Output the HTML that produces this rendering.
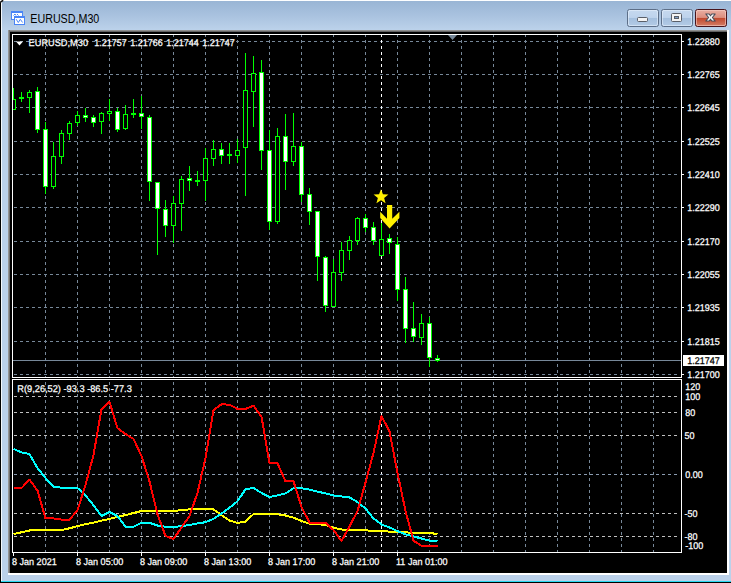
<!DOCTYPE html>
<html lang="en"><head><meta charset="utf-8"><title>EURUSD,M30</title>
<style>
html,body{margin:0;padding:0;background:#bbd1ea;overflow:hidden}
body{width:731px;height:583px;position:relative;font-family:"Liberation Sans",sans-serif}
svg{position:absolute;left:0;top:0;display:block}
.t{font-family:"Liberation Sans",sans-serif;font-size:9.7px;text-rendering:geometricPrecision;fill:#fff;stroke:#fff;stroke-width:0.25px}
.cap{font-family:"Liberation Sans",sans-serif;font-size:12px;fill:#000}
</style></head><body>
<svg width="731" height="583" viewBox="0 0 731 583">
<defs>
<linearGradient id="frm" x1="0" y1="0" x2="0" y2="1"><stop offset="0" stop-color="#98b4d4"/><stop offset="0.5" stop-color="#a9c2df"/><stop offset="1" stop-color="#bdd3eb"/></linearGradient>
<linearGradient id="glow" x1="0" y1="0" x2="1" y2="0"><stop offset="0" stop-color="#d3e2f2" stop-opacity="0.15"/><stop offset="1" stop-color="#d3e2f2" stop-opacity="0"/></linearGradient>
<linearGradient id="btn" x1="0" y1="0" x2="0" y2="1"><stop offset="0" stop-color="#c6d9ef"/><stop offset="0.47" stop-color="#bed3ec"/><stop offset="0.48" stop-color="#a3bedd"/><stop offset="1" stop-color="#b4cce6"/></linearGradient>
<linearGradient id="cls" x1="0" y1="0" x2="0" y2="1"><stop offset="0" stop-color="#eab0a4"/><stop offset="0.47" stop-color="#dc8e7f"/><stop offset="0.48" stop-color="#c0452b"/><stop offset="1" stop-color="#d48068"/></linearGradient>
<linearGradient id="bev" x1="0" y1="0" x2="0" y2="1"><stop offset="0" stop-color="#a6a6a6"/><stop offset="1" stop-color="#4e4e4e"/></linearGradient>
<linearGradient id="bevl" x1="0" y1="0" x2="1" y2="0"><stop offset="0" stop-color="#a6a6a6"/><stop offset="1" stop-color="#5e5e5e"/></linearGradient>
</defs>
<rect x="0" y="0" width="731" height="583" fill="#bbd1ea"/>
<rect x="0" y="0" width="731" height="31" fill="url(#frm)"/>
<rect x="0" y="0" width="731" height="1" fill="#fdfeff"/>
<rect x="1" y="1" width="1" height="580" fill="#f4f8fc"/>
<rect x="0" y="1" width="1" height="582" fill="#000"/>
<path d="M0 0H3V1H2V2H1V3H0Z" fill="#fff"/><path d="M0 2.800L1.200 1.500L3.200 0.300" stroke="#111" stroke-width="1.500" fill="none"/>
<rect x="1" y="581" width="730" height="1" fill="#2ad8f0"/>
<rect x="0" y="582" width="731" height="1" fill="#000"/>
<rect x="8" y="30" width="721" height="545" fill="#ffffff"/>
<rect x="8" y="30" width="719" height="2" fill="url(#bev)"/>
<rect x="8" y="30" width="2" height="543" fill="url(#bevl)"/>
<rect x="10" y="32" width="717" height="541" fill="#000"/>
<g shape-rendering="crispEdges">
<rect x="11" y="11" width="12" height="9" fill="#fff" stroke="none"/>
<path d="M11 11h12v2h-12zM11 11h1v9h-1zM22 11h1v9h-1zM11 19h12v1h-12z" fill="#4a85f6"/>
<rect x="14" y="16" width="11" height="9" fill="#fff"/>
<path d="M14 16h11v2h-11zM14 16h1v9h-1zM24 16h1v9h-1zM14 24h11v1h-11z" fill="#4a85f6"/>
</g>
<path d="M13.5 15.5l1.5-1.5 1 1.5M17 14l1.500 1.500" stroke="#4a85f6" stroke-width="1" fill="none"/>
<path d="M16.200 19.200L18.300 22.500L20.300 19.300L22.600 22.500" stroke="#4a85f6" stroke-width="1" fill="none"/>
<text class="cap" x="30.300" y="22.500" textLength="69" lengthAdjust="spacingAndGlyphs">EURUSD,M30</text>
<rect x="627.5" y="9.500" width="31" height="17" rx="2" ry="2" fill="url(#btn)" stroke="#5d6f88" stroke-width="1"/>
<rect x="628.5" y="10.500" width="29" height="15" rx="1.500" ry="1.500" fill="none" stroke="#e6f0fb" stroke-opacity="0.6" stroke-width="1"/>
<rect x="661.5" y="9.500" width="31" height="17" rx="2" ry="2" fill="url(#btn)" stroke="#5d6f88" stroke-width="1"/>
<rect x="662.5" y="10.500" width="29" height="15" rx="1.500" ry="1.500" fill="none" stroke="#e6f0fb" stroke-opacity="0.6" stroke-width="1"/>
<rect x="695.5" y="9.500" width="31" height="17" rx="2" ry="2" fill="url(#cls)" stroke="#47141c" stroke-width="1"/>
<rect x="696.5" y="10.500" width="29" height="15" rx="1.500" ry="1.500" fill="none" stroke="#f6cfc6" stroke-opacity="0.6" stroke-width="1"/>
<rect x="637.500" y="17.500" width="10" height="4" rx="1" fill="#f4f4f4" stroke="#5a5f68" stroke-width="1"/>
<rect x="671.500" y="13.500" width="10" height="8" rx="1" fill="#f4f4f4" stroke="#5a5f68" stroke-width="1"/>
<rect x="674.500" y="16.500" width="4" height="2" fill="#7f9fc6" stroke="#5a5f68" stroke-width="1"/>
<path d="M705.800 14H709.200L710.500 15.800L711.800 14H715.200L712.400 17.500L715.200 21H711.800L710.500 19.200L709.200 21H705.800L708.600 17.500Z" fill="#f7f7f7" stroke="#474c59" stroke-width="1.100" stroke-linejoin="round"/>
<g shape-rendering="crispEdges">
<rect x="12.500" y="34.500" width="669" height="343" fill="none" stroke="#fff" stroke-width="1"/>
<rect x="12.500" y="379.500" width="669" height="173" fill="none" stroke="#fff" stroke-width="1"/>
<line x1="14" y1="41.5" x2="680" y2="41.5" stroke="#778899" stroke-width="1" stroke-dasharray="3 3" stroke-dashoffset="0"/>
<line x1="14" y1="74.5" x2="680" y2="74.5" stroke="#778899" stroke-width="1" stroke-dasharray="3 3" stroke-dashoffset="0"/>
<line x1="14" y1="107.5" x2="680" y2="107.5" stroke="#778899" stroke-width="1" stroke-dasharray="3 3" stroke-dashoffset="0"/>
<line x1="14" y1="141.5" x2="680" y2="141.5" stroke="#778899" stroke-width="1" stroke-dasharray="3 3" stroke-dashoffset="0"/>
<line x1="14" y1="174.5" x2="680" y2="174.5" stroke="#778899" stroke-width="1" stroke-dasharray="3 3" stroke-dashoffset="0"/>
<line x1="14" y1="207.5" x2="680" y2="207.5" stroke="#778899" stroke-width="1" stroke-dasharray="3 3" stroke-dashoffset="0"/>
<line x1="14" y1="241.5" x2="680" y2="241.5" stroke="#778899" stroke-width="1" stroke-dasharray="3 3" stroke-dashoffset="0"/>
<line x1="14" y1="274.5" x2="680" y2="274.5" stroke="#778899" stroke-width="1" stroke-dasharray="3 3" stroke-dashoffset="0"/>
<line x1="14" y1="307.5" x2="680" y2="307.5" stroke="#778899" stroke-width="1" stroke-dasharray="3 3" stroke-dashoffset="0"/>
<line x1="14" y1="341.5" x2="680" y2="341.5" stroke="#778899" stroke-width="1" stroke-dasharray="3 3" stroke-dashoffset="0"/>
<line x1="14" y1="374.5" x2="680" y2="374.5" stroke="#778899" stroke-width="1" stroke-dasharray="3 3" stroke-dashoffset="0"/>
<line x1="45.5" y1="35" x2="45.5" y2="377" stroke="#778899" stroke-width="1" stroke-dasharray="3 3" stroke-dashoffset="1"/>
<line x1="45.5" y1="380" x2="45.5" y2="552" stroke="#778899" stroke-width="1" stroke-dasharray="3 3" stroke-dashoffset="4"/>
<line x1="77.5" y1="35" x2="77.5" y2="377" stroke="#778899" stroke-width="1" stroke-dasharray="3 3" stroke-dashoffset="1"/>
<line x1="77.5" y1="380" x2="77.5" y2="552" stroke="#778899" stroke-width="1" stroke-dasharray="3 3" stroke-dashoffset="4"/>
<line x1="109.5" y1="35" x2="109.5" y2="377" stroke="#778899" stroke-width="1" stroke-dasharray="3 3" stroke-dashoffset="1"/>
<line x1="109.5" y1="380" x2="109.5" y2="552" stroke="#778899" stroke-width="1" stroke-dasharray="3 3" stroke-dashoffset="4"/>
<line x1="141.5" y1="35" x2="141.5" y2="377" stroke="#778899" stroke-width="1" stroke-dasharray="3 3" stroke-dashoffset="1"/>
<line x1="141.5" y1="380" x2="141.5" y2="552" stroke="#778899" stroke-width="1" stroke-dasharray="3 3" stroke-dashoffset="4"/>
<line x1="173.5" y1="35" x2="173.5" y2="377" stroke="#778899" stroke-width="1" stroke-dasharray="3 3" stroke-dashoffset="1"/>
<line x1="173.5" y1="380" x2="173.5" y2="552" stroke="#778899" stroke-width="1" stroke-dasharray="3 3" stroke-dashoffset="4"/>
<line x1="205.5" y1="35" x2="205.5" y2="377" stroke="#778899" stroke-width="1" stroke-dasharray="3 3" stroke-dashoffset="1"/>
<line x1="205.5" y1="380" x2="205.5" y2="552" stroke="#778899" stroke-width="1" stroke-dasharray="3 3" stroke-dashoffset="4"/>
<line x1="237.5" y1="35" x2="237.5" y2="377" stroke="#778899" stroke-width="1" stroke-dasharray="3 3" stroke-dashoffset="1"/>
<line x1="237.5" y1="380" x2="237.5" y2="552" stroke="#778899" stroke-width="1" stroke-dasharray="3 3" stroke-dashoffset="4"/>
<line x1="269.5" y1="35" x2="269.5" y2="377" stroke="#778899" stroke-width="1" stroke-dasharray="3 3" stroke-dashoffset="1"/>
<line x1="269.5" y1="380" x2="269.5" y2="552" stroke="#778899" stroke-width="1" stroke-dasharray="3 3" stroke-dashoffset="4"/>
<line x1="301.5" y1="35" x2="301.5" y2="377" stroke="#778899" stroke-width="1" stroke-dasharray="3 3" stroke-dashoffset="1"/>
<line x1="301.5" y1="380" x2="301.5" y2="552" stroke="#778899" stroke-width="1" stroke-dasharray="3 3" stroke-dashoffset="4"/>
<line x1="333.5" y1="35" x2="333.5" y2="377" stroke="#778899" stroke-width="1" stroke-dasharray="3 3" stroke-dashoffset="1"/>
<line x1="333.5" y1="380" x2="333.5" y2="552" stroke="#778899" stroke-width="1" stroke-dasharray="3 3" stroke-dashoffset="4"/>
<line x1="365.5" y1="35" x2="365.5" y2="377" stroke="#778899" stroke-width="1" stroke-dasharray="3 3" stroke-dashoffset="1"/>
<line x1="365.5" y1="380" x2="365.5" y2="552" stroke="#778899" stroke-width="1" stroke-dasharray="3 3" stroke-dashoffset="4"/>
<line x1="397.5" y1="35" x2="397.5" y2="377" stroke="#778899" stroke-width="1" stroke-dasharray="3 3" stroke-dashoffset="1"/>
<line x1="397.5" y1="380" x2="397.5" y2="552" stroke="#778899" stroke-width="1" stroke-dasharray="3 3" stroke-dashoffset="4"/>
<line x1="429.5" y1="35" x2="429.5" y2="377" stroke="#778899" stroke-width="1" stroke-dasharray="3 3" stroke-dashoffset="1"/>
<line x1="429.5" y1="380" x2="429.5" y2="552" stroke="#778899" stroke-width="1" stroke-dasharray="3 3" stroke-dashoffset="4"/>
<line x1="461.5" y1="35" x2="461.5" y2="377" stroke="#778899" stroke-width="1" stroke-dasharray="3 3" stroke-dashoffset="1"/>
<line x1="461.5" y1="380" x2="461.5" y2="552" stroke="#778899" stroke-width="1" stroke-dasharray="3 3" stroke-dashoffset="4"/>
<line x1="493.5" y1="35" x2="493.5" y2="377" stroke="#778899" stroke-width="1" stroke-dasharray="3 3" stroke-dashoffset="1"/>
<line x1="493.5" y1="380" x2="493.5" y2="552" stroke="#778899" stroke-width="1" stroke-dasharray="3 3" stroke-dashoffset="4"/>
<line x1="525.5" y1="35" x2="525.5" y2="377" stroke="#778899" stroke-width="1" stroke-dasharray="3 3" stroke-dashoffset="1"/>
<line x1="525.5" y1="380" x2="525.5" y2="552" stroke="#778899" stroke-width="1" stroke-dasharray="3 3" stroke-dashoffset="4"/>
<line x1="557.5" y1="35" x2="557.5" y2="377" stroke="#778899" stroke-width="1" stroke-dasharray="3 3" stroke-dashoffset="1"/>
<line x1="557.5" y1="380" x2="557.5" y2="552" stroke="#778899" stroke-width="1" stroke-dasharray="3 3" stroke-dashoffset="4"/>
<line x1="589.5" y1="35" x2="589.5" y2="377" stroke="#778899" stroke-width="1" stroke-dasharray="3 3" stroke-dashoffset="1"/>
<line x1="589.5" y1="380" x2="589.5" y2="552" stroke="#778899" stroke-width="1" stroke-dasharray="3 3" stroke-dashoffset="4"/>
<line x1="621.5" y1="35" x2="621.5" y2="377" stroke="#778899" stroke-width="1" stroke-dasharray="3 3" stroke-dashoffset="1"/>
<line x1="621.5" y1="380" x2="621.5" y2="552" stroke="#778899" stroke-width="1" stroke-dasharray="3 3" stroke-dashoffset="4"/>
<line x1="653.5" y1="35" x2="653.5" y2="377" stroke="#778899" stroke-width="1" stroke-dasharray="3 3" stroke-dashoffset="1"/>
<line x1="653.5" y1="380" x2="653.5" y2="552" stroke="#778899" stroke-width="1" stroke-dasharray="3 3" stroke-dashoffset="4"/>
<line x1="381.500" y1="35" x2="381.500" y2="377" stroke="#fff" stroke-width="1" stroke-dasharray="3 3" stroke-dashoffset="1"/>
<line x1="381.500" y1="380" x2="381.500" y2="552" stroke="#fff" stroke-width="1" stroke-dasharray="3 3" stroke-dashoffset="4"/>
<line x1="14" y1="396.5" x2="680" y2="396.5" stroke="#c0c0c0" stroke-width="1" stroke-dasharray="3 3"/>
<line x1="14" y1="412.5" x2="680" y2="412.5" stroke="#c0c0c0" stroke-width="1" stroke-dasharray="3 3"/>
<line x1="14" y1="435.5" x2="680" y2="435.5" stroke="#c0c0c0" stroke-width="1" stroke-dasharray="3 3"/>
<line x1="14" y1="474.5" x2="680" y2="474.5" stroke="#8a9bb0" stroke-width="1" stroke-dasharray="3 3"/>
<line x1="14" y1="513.5" x2="680" y2="513.5" stroke="#c0c0c0" stroke-width="1" stroke-dasharray="3 3"/>
<line x1="14" y1="536.5" x2="680" y2="536.5" stroke="#c0c0c0" stroke-width="1" stroke-dasharray="3 3"/>
<rect x="13" y="360" width="668" height="1" fill="#778899"/>
<path d="M448 35H457L452.500 40Z" fill="#778899" shape-rendering="auto"/>
<rect x="13" y="88" width="1" height="22" fill="#00ff00"/>
<rect x="13" y="99" width="3" height="11" fill="#00ff00"/>
<rect x="13" y="100" width="2" height="9" fill="#000"/>
<rect x="21" y="92" width="1" height="10" fill="#00ff00"/>
<rect x="19" y="97" width="5" height="2" fill="#00ff00"/>
<rect x="29" y="90" width="1" height="23" fill="#00ff00"/>
<rect x="27" y="92" width="5" height="6" fill="#00ff00"/>
<rect x="28" y="93" width="3" height="4" fill="#000"/>
<rect x="37" y="87" width="1" height="46" fill="#00ff00"/>
<rect x="35" y="91" width="5" height="39" fill="#00ff00"/>
<rect x="36" y="92" width="3" height="37" fill="#fff"/>
<rect x="45" y="122" width="1" height="72" fill="#00ff00"/>
<rect x="43" y="129" width="5" height="58" fill="#00ff00"/>
<rect x="44" y="130" width="3" height="56" fill="#fff"/>
<rect x="53" y="142" width="1" height="47" fill="#00ff00"/>
<rect x="51" y="156" width="5" height="31" fill="#00ff00"/>
<rect x="52" y="157" width="3" height="29" fill="#000"/>
<rect x="61" y="130" width="1" height="34" fill="#00ff00"/>
<rect x="59" y="133" width="5" height="24" fill="#00ff00"/>
<rect x="60" y="134" width="3" height="22" fill="#000"/>
<rect x="69" y="121" width="1" height="19" fill="#00ff00"/>
<rect x="67" y="123" width="5" height="11" fill="#00ff00"/>
<rect x="68" y="124" width="3" height="9" fill="#000"/>
<rect x="77" y="111" width="1" height="15" fill="#00ff00"/>
<rect x="75" y="115" width="5" height="8" fill="#00ff00"/>
<rect x="76" y="116" width="3" height="6" fill="#000"/>
<rect x="85" y="108" width="1" height="14" fill="#00ff00"/>
<rect x="83" y="115" width="5" height="3" fill="#00ff00"/>
<rect x="84" y="116" width="3" height="1" fill="#fff"/>
<rect x="93" y="115" width="1" height="12" fill="#00ff00"/>
<rect x="91" y="117" width="5" height="6" fill="#00ff00"/>
<rect x="92" y="118" width="3" height="4" fill="#fff"/>
<rect x="101" y="112" width="1" height="22" fill="#00ff00"/>
<rect x="99" y="113" width="5" height="9" fill="#00ff00"/>
<rect x="100" y="114" width="3" height="7" fill="#000"/>
<rect x="109" y="99" width="1" height="22" fill="#00ff00"/>
<rect x="107" y="111" width="5" height="3" fill="#00ff00"/>
<rect x="108" y="112" width="3" height="1" fill="#000"/>
<rect x="117" y="108" width="1" height="24" fill="#00ff00"/>
<rect x="115" y="111" width="5" height="19" fill="#00ff00"/>
<rect x="116" y="112" width="3" height="17" fill="#fff"/>
<rect x="125" y="105" width="1" height="25" fill="#00ff00"/>
<rect x="123" y="114" width="5" height="15" fill="#00ff00"/>
<rect x="124" y="115" width="3" height="13" fill="#000"/>
<rect x="133" y="99" width="1" height="19" fill="#00ff00"/>
<rect x="131" y="113" width="5" height="2" fill="#00ff00"/>
<rect x="141" y="96" width="1" height="33" fill="#00ff00"/>
<rect x="139" y="113" width="5" height="4" fill="#00ff00"/>
<rect x="140" y="114" width="3" height="2" fill="#fff"/>
<rect x="149" y="115" width="1" height="86" fill="#00ff00"/>
<rect x="147" y="117" width="5" height="65" fill="#00ff00"/>
<rect x="148" y="118" width="3" height="63" fill="#fff"/>
<rect x="157" y="182" width="1" height="73" fill="#00ff00"/>
<rect x="155" y="182" width="5" height="27" fill="#00ff00"/>
<rect x="156" y="183" width="3" height="25" fill="#fff"/>
<rect x="165" y="200" width="1" height="37" fill="#00ff00"/>
<rect x="163" y="209" width="5" height="17" fill="#00ff00"/>
<rect x="164" y="210" width="3" height="15" fill="#fff"/>
<rect x="173" y="196" width="1" height="47" fill="#00ff00"/>
<rect x="171" y="203" width="5" height="23" fill="#00ff00"/>
<rect x="172" y="204" width="3" height="21" fill="#000"/>
<rect x="181" y="176" width="1" height="55" fill="#00ff00"/>
<rect x="179" y="179" width="5" height="25" fill="#00ff00"/>
<rect x="180" y="180" width="3" height="23" fill="#000"/>
<rect x="189" y="166" width="1" height="25" fill="#00ff00"/>
<rect x="187" y="178" width="5" height="3" fill="#00ff00"/>
<rect x="188" y="179" width="3" height="1" fill="#fff"/>
<rect x="197" y="171" width="1" height="15" fill="#00ff00"/>
<rect x="195" y="180" width="5" height="2" fill="#00ff00"/>
<rect x="205" y="148" width="1" height="53" fill="#00ff00"/>
<rect x="203" y="158" width="5" height="23" fill="#00ff00"/>
<rect x="204" y="159" width="3" height="21" fill="#000"/>
<rect x="213" y="140" width="1" height="26" fill="#00ff00"/>
<rect x="211" y="149" width="5" height="10" fill="#00ff00"/>
<rect x="212" y="150" width="3" height="8" fill="#000"/>
<rect x="221" y="143" width="1" height="21" fill="#00ff00"/>
<rect x="219" y="149" width="5" height="7" fill="#00ff00"/>
<rect x="220" y="150" width="3" height="5" fill="#fff"/>
<rect x="229" y="143" width="1" height="21" fill="#00ff00"/>
<rect x="227" y="154" width="5" height="2" fill="#00ff00"/>
<rect x="237" y="139" width="1" height="24" fill="#00ff00"/>
<rect x="235" y="150" width="5" height="6" fill="#00ff00"/>
<rect x="236" y="151" width="3" height="4" fill="#000"/>
<rect x="245" y="53" width="1" height="143" fill="#00ff00"/>
<rect x="243" y="90" width="5" height="58" fill="#00ff00"/>
<rect x="244" y="91" width="3" height="56" fill="#000"/>
<rect x="253" y="56" width="1" height="71" fill="#00ff00"/>
<rect x="251" y="73" width="5" height="19" fill="#00ff00"/>
<rect x="252" y="74" width="3" height="17" fill="#000"/>
<rect x="261" y="60" width="1" height="110" fill="#00ff00"/>
<rect x="259" y="72" width="5" height="79" fill="#00ff00"/>
<rect x="260" y="73" width="3" height="77" fill="#fff"/>
<rect x="269" y="130" width="1" height="100" fill="#00ff00"/>
<rect x="267" y="150" width="5" height="72" fill="#00ff00"/>
<rect x="268" y="151" width="3" height="70" fill="#fff"/>
<rect x="277" y="128" width="1" height="96" fill="#00ff00"/>
<rect x="275" y="136" width="5" height="86" fill="#00ff00"/>
<rect x="276" y="137" width="3" height="84" fill="#000"/>
<rect x="285" y="114" width="1" height="76" fill="#00ff00"/>
<rect x="283" y="136" width="5" height="26" fill="#00ff00"/>
<rect x="284" y="137" width="3" height="24" fill="#fff"/>
<rect x="293" y="113" width="1" height="53" fill="#00ff00"/>
<rect x="291" y="146" width="5" height="16" fill="#00ff00"/>
<rect x="292" y="147" width="3" height="14" fill="#000"/>
<rect x="301" y="142" width="1" height="60" fill="#00ff00"/>
<rect x="299" y="146" width="5" height="49" fill="#00ff00"/>
<rect x="300" y="147" width="3" height="47" fill="#fff"/>
<rect x="309" y="188" width="1" height="37" fill="#00ff00"/>
<rect x="307" y="194" width="5" height="18" fill="#00ff00"/>
<rect x="308" y="195" width="3" height="16" fill="#fff"/>
<rect x="317" y="211" width="1" height="70" fill="#00ff00"/>
<rect x="315" y="211" width="5" height="46" fill="#00ff00"/>
<rect x="316" y="212" width="3" height="44" fill="#fff"/>
<rect x="325" y="256" width="1" height="56" fill="#00ff00"/>
<rect x="323" y="257" width="5" height="49" fill="#00ff00"/>
<rect x="324" y="258" width="3" height="47" fill="#fff"/>
<rect x="333" y="259" width="1" height="48" fill="#00ff00"/>
<rect x="331" y="272" width="5" height="35" fill="#00ff00"/>
<rect x="332" y="273" width="3" height="33" fill="#000"/>
<rect x="341" y="242" width="1" height="39" fill="#00ff00"/>
<rect x="339" y="250" width="5" height="23" fill="#00ff00"/>
<rect x="340" y="251" width="3" height="21" fill="#000"/>
<rect x="349" y="236" width="1" height="24" fill="#00ff00"/>
<rect x="347" y="240" width="5" height="11" fill="#00ff00"/>
<rect x="348" y="241" width="3" height="9" fill="#000"/>
<rect x="357" y="217" width="1" height="28" fill="#00ff00"/>
<rect x="355" y="218" width="5" height="23" fill="#00ff00"/>
<rect x="356" y="219" width="3" height="21" fill="#000"/>
<rect x="365" y="214" width="1" height="18" fill="#00ff00"/>
<rect x="363" y="218" width="5" height="10" fill="#00ff00"/>
<rect x="364" y="219" width="3" height="8" fill="#fff"/>
<rect x="373" y="222" width="1" height="23" fill="#00ff00"/>
<rect x="371" y="227" width="5" height="14" fill="#00ff00"/>
<rect x="372" y="228" width="3" height="12" fill="#fff"/>
<rect x="381" y="223" width="1" height="33" fill="#00ff00"/>
<rect x="379" y="239" width="5" height="17" fill="#00ff00"/>
<rect x="380" y="240" width="3" height="15" fill="#000"/>
<rect x="389" y="234" width="1" height="20" fill="#00ff00"/>
<rect x="387" y="238" width="5" height="5" fill="#00ff00"/>
<rect x="388" y="239" width="3" height="3" fill="#fff"/>
<rect x="397" y="237" width="1" height="64" fill="#00ff00"/>
<rect x="395" y="244" width="5" height="46" fill="#00ff00"/>
<rect x="396" y="245" width="3" height="44" fill="#fff"/>
<rect x="405" y="277" width="1" height="66" fill="#00ff00"/>
<rect x="403" y="289" width="5" height="40" fill="#00ff00"/>
<rect x="404" y="290" width="3" height="38" fill="#fff"/>
<rect x="413" y="302" width="1" height="40" fill="#00ff00"/>
<rect x="411" y="328" width="5" height="9" fill="#00ff00"/>
<rect x="412" y="329" width="3" height="7" fill="#fff"/>
<rect x="421" y="314" width="1" height="31" fill="#00ff00"/>
<rect x="419" y="323" width="5" height="15" fill="#00ff00"/>
<rect x="420" y="324" width="3" height="13" fill="#000"/>
<rect x="429" y="317" width="1" height="50" fill="#00ff00"/>
<rect x="427" y="323" width="5" height="35" fill="#00ff00"/>
<rect x="428" y="324" width="3" height="33" fill="#fff"/>
<rect x="437" y="355" width="1" height="7" fill="#00ff00"/>
<rect x="435" y="358" width="5" height="3" fill="#00ff00"/>
<rect x="436" y="359" width="3" height="1" fill="#fff"/>
</g>
<polyline points="13.5,534.1 21.5,532.3 29.5,530.5 37.5,530.0 45.5,530.0 53.5,530.0 61.5,530.0 69.5,528.3 77.5,526.2 85.5,524.2 93.5,522.6 101.5,520.6 109.5,518.9 117.5,516.8 125.5,515.1 133.5,513.0 141.5,511.0 149.5,511.0 157.5,511.0 165.5,511.0 173.5,511.0 181.5,510.2 189.5,509.4 197.5,509.4 205.5,509.4 213.5,509.4 221.5,515.1 229.5,520.6 237.5,522.9 245.5,521.7 253.5,514.0 261.5,514.0 269.5,514.0 277.5,514.3 285.5,515.5 293.5,517.6 301.5,520.9 309.5,523.7 317.5,524.2 325.5,525.0 333.5,527.8 341.5,529.5 349.5,530.2 357.5,530.3 365.5,530.3 373.5,531.1 381.5,531.1 389.5,531.6 397.5,531.9 405.5,532.4 413.5,532.8 421.5,532.8 429.5,532.9 437.5,534.1" fill="none" stroke="#ffff00" stroke-width="2" stroke-linejoin="round" shape-rendering="crispEdges"/>
<polyline points="13.5,448.8 21.5,452.4 29.5,454.0 37.5,468.0 45.5,478.1 53.5,486.8 61.5,487.7 69.5,488.0 77.5,488.0 85.5,495.4 93.5,505.3 101.5,516.0 109.5,511.9 117.5,516.0 125.5,526.7 133.5,526.7 141.5,522.9 149.5,522.9 157.5,525.5 165.5,526.7 173.5,527.0 181.5,526.2 189.5,525.0 197.5,523.4 205.5,522.2 213.5,518.9 221.5,513.5 229.5,507.7 237.5,501.2 245.5,489.3 253.5,488.0 261.5,492.9 269.5,497.0 277.5,495.4 285.5,493.4 293.5,488.3 301.5,488.3 309.5,489.6 317.5,491.6 325.5,493.4 333.5,495.4 341.5,496.5 349.5,497.4 357.5,502.0 365.5,508.6 373.5,518.4 381.5,524.5 389.5,527.5 397.5,531.1 405.5,534.4 413.5,536.5 421.5,538.5 429.5,540.7 437.5,541.0" fill="none" stroke="#00ffff" stroke-width="2" stroke-linejoin="round" shape-rendering="crispEdges"/>
<polyline points="13.5,488.0 21.5,488.0 29.5,479.8 37.5,490.5 45.5,518.4 53.5,518.4 61.5,519.6 69.5,519.6 77.5,510.2 85.5,485.0 93.5,455.0 101.5,409.3 109.5,401.9 117.5,428.2 125.5,434.0 133.5,438.9 141.5,456.0 149.5,481.4 157.5,514.3 165.5,536.0 173.5,539.0 181.5,527.5 189.5,516.0 197.5,492.9 205.5,458.0 213.5,410.1 221.5,404.3 229.5,404.7 237.5,408.9 245.5,408.9 253.5,405.7 261.5,416.7 269.5,463.2 277.5,463.2 285.5,481.4 293.5,481.4 301.5,506.9 309.5,522.6 317.5,522.9 325.5,522.9 333.5,530.0 341.5,541.0 349.5,526.5 357.5,511.0 365.5,482.5 373.5,453.0 381.5,415.9 389.5,431.5 397.5,473.0 405.5,511.0 413.5,540.7 421.5,545.9 429.5,545.9 437.5,545.9" fill="none" stroke="#ff0000" stroke-width="2" stroke-linejoin="round" shape-rendering="crispEdges"/>
<polygon points="381.00,189.20 382.94,194.33 388.42,194.59 384.14,198.02 385.58,203.31 381.00,200.30 376.42,203.31 377.86,198.02 373.58,194.59 379.06,194.33" fill="#fff000"/>
<path d="M387 205H392.200V218.800L399.400 211.800V218L389.600 228.500L380.200 218V211.800L387 218.800Z" fill="#fff000"/>
<path d="M16 41.500H23L19.500 45.500Z" fill="#fff"/>
<text class="t" transform="translate(28.6 45.6) scale(0.9515 1)">EURUSD,M30</text>
<text class="t" transform="translate(94.3 45.6) scale(0.9278 1)">1.21757</text>
<text class="t" transform="translate(130.3 45.6) scale(0.9278 1)">1.21766</text>
<text class="t" transform="translate(166.3 45.6) scale(0.9278 1)">1.21744</text>
<text class="t" transform="translate(202.3 45.6) scale(0.9278 1)">1.21747</text>
<rect x="682" y="41" width="2" height="1" fill="#fff"/>
<text class="t" transform="translate(687.3 44.6) scale(0.9278 1)">1.22880</text>
<rect x="682" y="74" width="2" height="1" fill="#fff"/>
<text class="t" transform="translate(687.3 77.6) scale(0.9278 1)">1.22765</text>
<rect x="682" y="107" width="2" height="1" fill="#fff"/>
<text class="t" transform="translate(687.3 110.6) scale(0.9278 1)">1.22645</text>
<rect x="682" y="141" width="2" height="1" fill="#fff"/>
<text class="t" transform="translate(687.3 144.6) scale(0.9278 1)">1.22525</text>
<rect x="682" y="174" width="2" height="1" fill="#fff"/>
<text class="t" transform="translate(687.3 177.6) scale(0.9278 1)">1.22410</text>
<rect x="682" y="207" width="2" height="1" fill="#fff"/>
<text class="t" transform="translate(687.3 210.6) scale(0.9278 1)">1.22290</text>
<rect x="682" y="241" width="2" height="1" fill="#fff"/>
<text class="t" transform="translate(687.3 244.6) scale(0.9278 1)">1.22170</text>
<rect x="682" y="274" width="2" height="1" fill="#fff"/>
<text class="t" transform="translate(687.3 277.6) scale(0.9278 1)">1.22055</text>
<rect x="682" y="307" width="2" height="1" fill="#fff"/>
<text class="t" transform="translate(687.3 310.6) scale(0.9278 1)">1.21935</text>
<rect x="682" y="341" width="2" height="1" fill="#fff"/>
<text class="t" transform="translate(687.3 344.6) scale(0.9278 1)">1.21815</text>
<rect x="682" y="374" width="2" height="1" fill="#fff"/>
<text class="t" transform="translate(687.3 377.6) scale(0.9278 1)">1.21700</text>
<rect x="683" y="355" width="41" height="11" fill="#fff"/>
<text class="t" transform="translate(687.3 363.6) scale(0.9278 1)" style="fill:#000;stroke:#000">1.21747</text>
<text class="t" transform="translate(17.3 391.6) scale(0.9536 1)">R(9,26,52) -93.3 -86.5 -77.3</text>
<text class="t" transform="translate(685.3 389.6) scale(0.9278 1)">120</text>
<text class="t" transform="translate(685.3 399.6) scale(0.9278 1)">100</text>
<text class="t" transform="translate(685.3 415.6) scale(0.9278 1)">80</text>
<text class="t" transform="translate(684.5 438.6) scale(0.9278 1)">50</text>
<text class="t" transform="translate(685.3 477.6) scale(0.9278 1)">0.00</text>
<text class="t" transform="translate(684.5 516.6) scale(0.9278 1)">-50</text>
<text class="t" transform="translate(684.5 539.6) scale(0.9278 1)">-80</text>
<text class="t" transform="translate(685.3 548.6) scale(0.9278 1)">-100</text>
<rect x="13" y="553" width="1" height="3" fill="#fff"/>
<text class="t" transform="translate(12 564.6) scale(0.933 1)">8 Jan 2021</text>
<rect x="77" y="553" width="1" height="3" fill="#fff"/>
<text class="t" transform="translate(76 564.6) scale(0.933 1)">8 Jan 05:00</text>
<rect x="141" y="553" width="1" height="3" fill="#fff"/>
<text class="t" transform="translate(140 564.6) scale(0.933 1)">8 Jan 09:00</text>
<rect x="205" y="553" width="1" height="3" fill="#fff"/>
<text class="t" transform="translate(204 564.6) scale(0.933 1)">8 Jan 13:00</text>
<rect x="269" y="553" width="1" height="3" fill="#fff"/>
<text class="t" transform="translate(268 564.6) scale(0.933 1)">8 Jan 17:00</text>
<rect x="333" y="553" width="1" height="3" fill="#fff"/>
<text class="t" transform="translate(332 564.6) scale(0.933 1)">8 Jan 21:00</text>
<rect x="397" y="553" width="1" height="3" fill="#fff"/>
<text class="t" transform="translate(396 564.6) scale(0.933 1)">11 Jan 01:00</text>
</svg>
</body></html>
